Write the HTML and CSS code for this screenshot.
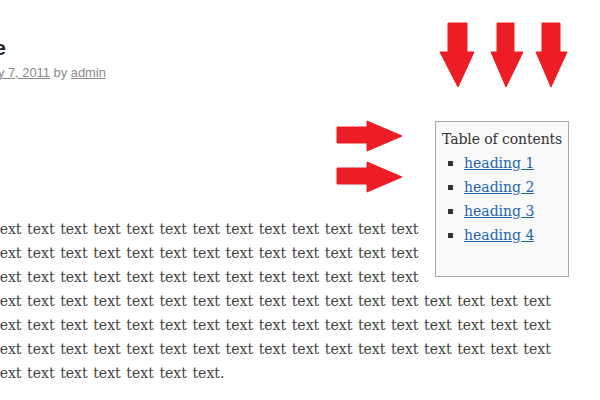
FILE: index.html
```html
<!DOCTYPE html>
<html>
<head>
<meta charset="utf-8">
<link rel="stylesheet" href="styles.css">
</head>
<body>
<div class="page">
  <header class="post-header">
    <h1 class="post-title">Sample page</h1>
    <div class="post-meta"><a href="#">May 7, 2011</a> by <a href="#">admin</a></div>
  </header>
  <article class="post-body">
    <div class="toc">
      <div class="toc-title">Table of contents</div>
      <ul class="toc-list">
        <li><a href="#">heading 1</a></li>
        <li><a href="#">heading 2</a></li>
        <li><a href="#">heading 3</a></li>
        <li><a href="#">heading 4</a></li>
      </ul>
    </div>
    <p class="post-text">text text text text text text text text text text text text text text text text text text text text text text text text text text text text text text text text text text text text text text text text text text text text text text text text text text text text text text text text text text text text text text text text text text text text text text text text text text text text text text text text text text text text text text text text text text text text text text text text text.</p>
  </article>
  <svg class="arrows" width="600" height="400" viewBox="0 0 600 400">
    <g fill="#ee1c25" stroke="#ee1c25" stroke-width="1" stroke-linejoin="round">
      <polygon points="337,127 367,127 367,121 402,136 367,151 367,143 337,143"/>
      <polygon points="337,168 367,168 367,162 402,177 367,192 367,184 337,184"/>
      <polygon points="448,23 467,23 467,52 474,52 458,87 440,52 448,52"/>
      <polygon points="497,23 514,23 514,52 523,52 506,87 491,52 497,52"/>
      <polygon points="542,23 560,23 560,52 567,52 551,87 536,52 542,52"/>
    </g>
  </svg>
</div>
</body>
</html>
```
FILE: styles.css
```css
html, body {
  margin: 0;
  padding: 0;
  background: #ffffff;
}
body {
  width: 600px;
  height: 400px;
  overflow: hidden;
}
.page {
  position: relative;
  width: 600px;
  height: 400px;
}
.post-header {
  height: 121px;
  box-sizing: border-box;
  padding-top: 35px;
}
.post-title {
  margin: 0 0 0 -200px;
  width: 206px;
  text-align: right;
  white-space: nowrap;
  font-family: "Liberation Sans", Arial, sans-serif;
  font-weight: bold;
  font-size: 21px;
  line-height: 26px;
  color: #222;
}
.post-meta {
  margin: 4px 0 0 -20px;
  font-family: "Liberation Sans", Arial, sans-serif;
  font-size: 12.9px;
  line-height: 16px;
  color: #8a8a8a;
  white-space: nowrap;
}
.post-meta a {
  color: #8a8a8a;
  text-decoration: underline;
}
.post-body {
  display: flow-root;
  margin-left: -6px;
  width: 580px;
}
.toc {
  float: right;
  margin: 0 5px 8px 10px;
  width: 134px;
  box-sizing: border-box;
  padding: 5px 6px 29px 6px;
  border: 1px solid #aaa;
  background: #f9f9f9;
  font-family: "DejaVu Serif", serif;
  font-size: 14px;
  line-height: 24px;
  color: #333;
}
.toc-title {
  white-space: nowrap;
  letter-spacing: -0.1px;
}
.toc-list {
  list-style: square;
  margin: 0;
  padding-left: 22px;
}
.toc-list li::marker {
  color: #333;
  font-size: 15px;
}
.toc-list a {
  color: #1f64b0;
  text-decoration: underline;
}
.post-text {
  margin: 96px 0 0 0;
  font-family: "DejaVu Serif", serif;
  font-size: 14px;
  line-height: 24px;
  word-spacing: 1.2px;
  color: #444;
}
.arrows {
  position: absolute;
  left: 0;
  top: 0;
  pointer-events: none;
}
```
